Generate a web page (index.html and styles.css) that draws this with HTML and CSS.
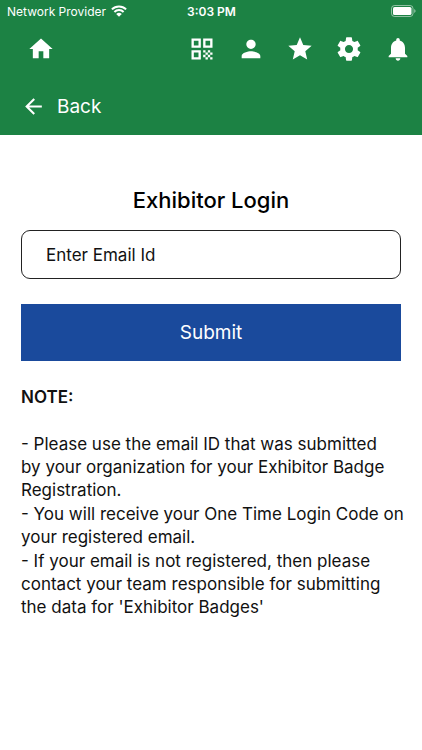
FILE: index.html
```html
<!DOCTYPE html>
<html lang="en">
<head>
    <meta charset="UTF-8">
    <meta name="viewport" content="width=device-width, initial-scale=1.0">
    <title>Exhibitor Login</title>
    <link rel="stylesheet" href="styles.css">
</head>
<body>
    <header class="header">
        <div class="status-bar">
            <div class="carrier">
                <span>Network Provider</span>
                <svg class="wifi" viewBox="0 0 16 12" aria-hidden="true">
                    <path d="M.9 4.400a10 10 0 0 1 14.200 0M3.400 7a6.500 6.500 0 0 1 9.200 0" fill="none" stroke="currentColor" stroke-width="2"/>
                    <path d="M8 11.800L5.200 9a4 4 0 0 1 5.600 0z" fill="currentColor"/>
                </svg>
            </div>
            <div class="clock">3:03 PM</div>
            <div class="power">
                <svg class="battery" viewBox="0 0 25 12" aria-hidden="true">
                    <rect x="0.5" y="0.5" width="21.5" height="11" rx="3" fill="none" stroke="currentColor" opacity="0.5"/>
                    <rect x="2" y="2" width="18.5" height="8" rx="1.6" fill="currentColor"/>
                    <path d="M23.2 4v4c1-.5 1.4-1.2 1.4-2s-.4-1.500-1.400-2z" fill="currentColor" opacity="0.5"/>
                </svg>
            </div>
        </div>

        <nav class="toolbar">
            <a class="icon-link" href="#home" aria-label="Home">
                <svg viewBox="0 0 24 24"><path d="M10 20v-6h4v6h5v-8h3L12 3 2 12h3v8z"/></svg>
            </a>
            <div class="toolbar-actions">
                <a class="icon-link" href="#scan" aria-label="QR code">
                    <svg viewBox="0 0 24 24"><path fill-rule="evenodd" d="M3 11h8V3H3v8zm2-6h4v4H5V5zM3 21h8v-8H3v8zm2-6h4v4H5v-4zM13 3v8h8V3h-8zm6 6h-4V5h4v4zM19 19h2v2h-2zM13 13h2v2h-2zM15 15h2v2h-2zM13 17h2v2h-2zM15 19h2v2h-2zM17 17h2v2h-2zM17 13h2v2h-2zM19 15h2v2h-2z"/></svg>
                </a>
                <a class="icon-link" href="#profile" aria-label="Profile">
                    <svg viewBox="0 0 24 24"><path d="M12 12c2.210 0 4-1.790 4-4s-1.790-4-4-4-4 1.790-4 4 1.790 4 4 4zm0 2c-2.670 0-8 1.340-8 4v2h16v-2c0-2.660-5.330-4-8-4z"/></svg>
                </a>
                <a class="icon-link" href="#favourites" aria-label="Favourites">
                    <svg viewBox="0 0 24 24"><path d="M12 17.270L18.180 21l-1.640-7.030L22 9.240l-7.190-.61L12 2 9.190 8.630 2 9.240l5.460 4.730L5.820 21z"/></svg>
                </a>
                <a class="icon-link" href="#settings" aria-label="Settings">
                    <svg viewBox="0 0 24 24"><path d="M19.430 12.980c.04-.32.07-.64.07-.98s-.03-.66-.07-.98l2.110-1.650c.19-.15.24-.42.12-.64l-2-3.460c-.12-.22-.39-.3-.61-.22l-2.490 1c-.52-.4-1.080-.73-1.690-.98l-.38-2.650C14.460 2.180 14.250 2 14 2h-4c-.25 0-.46.18-.49.42l-.38 2.650c-.61.25-1.170.59-1.690.98l-2.490-1c-.23-.09-.49 0-.61.22l-2 3.460c-.13.22-.07.49.12.64l2.110 1.650c-.04.32-.07.65-.07.98s.03.66.07.98l-2.110 1.650c-.19.15-.24.42-.12.64l2 3.460c.12.22.39.3.61.22l2.490-1c.52.4 1.080.73 1.690.98l.38 2.650c.03.24.24.42.49.42h4c.25 0 .46-.18.49-.42l.38-2.650c.61-.25 1.170-.59 1.690-.98l2.490 1c.23.09.49 0 .61-.22l2-3.460c.12-.22.07-.49-.12-.64l-2.110-1.650zM12 15.500c-1.930 0-3.500-1.570-3.500-3.500s1.570-3.500 3.500-3.500 3.500 1.570 3.500 3.500-1.570 3.500-3.500 3.500z"/></svg>
                </a>
                <a class="icon-link" href="#notifications" aria-label="Notifications">
                    <svg viewBox="0 0 24 24"><path d="M12 22c1.100 0 2-.9 2-2h-4c0 1.100.89 2 2 2zm6-6v-5c0-3.070-1.640-5.640-4.500-6.320V4c0-.83-.67-1.500-1.500-1.500s-1.500.67-1.500 1.500v.68C7.630 5.360 6 7.920 6 11v5l-2 2v1h16v-1l-2-2z"/></svg>
                </a>
            </div>
        </nav>

        <a class="back-link" href="#back">
            <svg viewBox="0 0 24 24" aria-hidden="true"><path d="M20 11H7.830l5.590-5.590L12 4l-8 8 8 8 1.410-1.410L7.830 13H20v-2z"/></svg>
            <span>Back</span>
        </a>
    </header>

    <main class="content">
        <h1>Exhibitor Login</h1>
        <form class="login-form" action="#">
            <input class="email-input" type="email" name="email" placeholder="Enter Email Id" aria-label="Email Id">
            <button class="submit-btn" type="submit">Submit</button>
        </form>

        <section class="note">
            <h2>NOTE:</h2>
            <p>- Please use the email ID that was submitted<br>by your organization for your Exhibitor Badge<br>Registration.</p>
            <p>- You will receive your One Time Login Code on<br>your registered email.</p>
            <p>- If your email is not registered, then please<br>contact your team responsible for submitting<br>the data for 'Exhibitor Badges'</p>
        </section>
    </main>
</body>
</html>
```

FILE: styles.css
```css
* {
    margin: 0;
    padding: 0;
    box-sizing: border-box;
}

body {
    font-family: Inter, Roboto, sans-serif;
    font-size: 17px;
    background-color: #fff;
    color: #111;
}

.header {
    background-color: #1c8244;
    color: white;
    padding-bottom: 12px;
}

.header a {
    color: inherit;
    text-decoration: none;
}

.header a svg {
    display: block;
    fill: currentColor;
}

.status-bar {
    display: grid;
    grid-template-columns: 1fr auto 1fr;
    align-items: center;
    height: 22px;
    padding: 0 6px 0 7px;
    font-size: 12px;
}

.carrier {
    display: flex;
    align-items: center;
    gap: 5px;
}

.wifi {
    width: 16px;
    height: 12px;
}

.clock {
    font-weight: 600;
}

.power {
    display: flex;
    justify-content: flex-end;
}

.battery {
    width: 25px;
    height: 12px;
}

.toolbar {
    display: flex;
    justify-content: space-between;
    align-items: center;
    height: 54px;
    padding: 0 10px 0 27px;
}

.toolbar-actions {
    display: flex;
    gap: 21px;
}

.icon-link svg {
    width: 28px;
    height: 28px;
}

.back-link {
    display: inline-flex;
    align-items: center;
    gap: 11px;
    height: 47px;
    padding: 14px 21px 0;
    font-size: 19px;
}

.back-link svg {
    width: 25px;
    height: 25px;
}

.content {
    padding: 52px 21px;
}

h1 {
    margin-bottom: 17px;
    font-size: 22px;
    line-height: 26px;
    font-weight: 500;
    text-align: center;
    color: #000;
}

.login-form {
    display: flex;
    flex-direction: column;
    gap: 25px;
}

.email-input {
    height: 49px;
    padding: 0 24px;
    border: 1px solid #222;
    border-radius: 9px;
    background-color: #fff;
    font: inherit;
    color: #111;
}

.email-input::placeholder {
    color: #111;
    opacity: 1;
}

.submit-btn {
    height: 57px;
    border: none;
    background-color: #1a4a9c;
    color: white;
    font: inherit;
    font-size: 19px;
    cursor: pointer;
}

/* runs a little past the form so the longest line stays whole */
.note {
    margin: 25px -12px 0 0;
    line-height: 23px;
}

.note h2 {
    margin-bottom: 24px;
    font-size: 17px;
    font-weight: 600;
}

.note p {
    margin-bottom: 1px;
}
```
